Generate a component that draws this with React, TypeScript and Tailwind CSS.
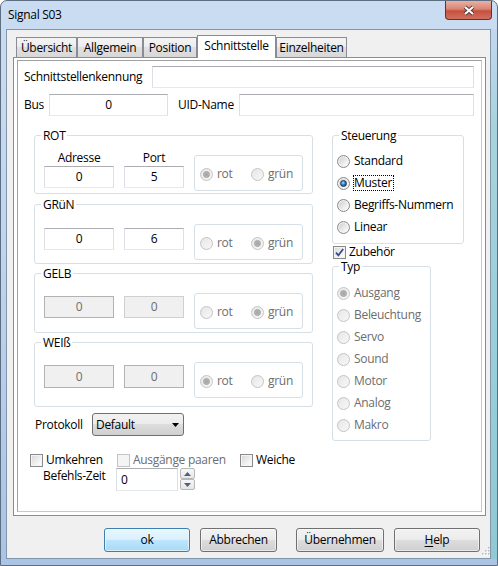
import React from "react";

const groupBorder = "border border-[#d5dfe5] rounded-[3px]";
const btnFace =
  "bg-[linear-gradient(to_bottom,#f2f2f2_0%,#ebebeb_50%,#dddddd_50%,#cfcfcf_100%)]";

interface DotProps {
  checked?: boolean;
  disabled?: boolean;
}

function RadioDot({ checked, disabled }: DotProps) {
  return (
    <span
      className={`w-[13px] h-[13px] shrink-0 rounded-full border flex items-center justify-center ${
        disabled
          ? "border-[#c4c4c4] bg-[linear-gradient(135deg,#e6e6e6,#f8f8f8)]"
          : "border-[#8a8a8a] bg-[linear-gradient(135deg,#c9c9c9,#f3f3f3_70%,#ffffff)] shadow-[inset_0_0_0_1px_#f4f4f4]"
      }`}
    >
      {checked && (
        <span
          className={`w-[7px] h-[7px] rounded-full border ${
            disabled
              ? "border-[#9f9f9f] bg-[radial-gradient(circle,#a8a8a8_35%,#c8c8c8_90%)]"
              : "border-[#1c3b5f] bg-[radial-gradient(circle_at_40%_35%,#a6e0fb,#2a86c5_45%,#0b3d6c_90%)]"
          }`}
        />
      )}
    </span>
  );
}

interface RadioProps extends DotProps {
  label: string;
  focus?: boolean;
  className?: string;
}

function Radio({ label, checked, disabled, focus, className = "" }: RadioProps) {
  return (
    <div className={`flex items-center ${className}`}>
      <RadioDot checked={checked} disabled={disabled} />
      {focus ? (
        <span className="ml-[3px] border border-dotted border-black leading-[14px] pr-[1px]">{label}</span>
      ) : (
        <span className={`ml-[4px] ${disabled ? "text-[#6d6d6d]" : ""}`}>{label}</span>
      )}
    </div>
  );
}

function CheckBox({ label, checked, disabled, className = "" }: RadioProps) {
  return (
    <div className={`flex items-center ${className}`}>
      <span
        className={`w-[13px] h-[13px] shrink-0 border flex items-center justify-center ${
          disabled
            ? "border-[#c4c4c4] bg-[#f4f4f4]"
            : "border-[#8a8a8a] bg-[linear-gradient(135deg,#d6d6d6,#f5f5f5_70%,#ffffff)] shadow-[inset_0_0_0_1px_#f4f4f4]"
        }`}
      >
        {checked && (
          <svg width="9" height="9" viewBox="0 0 9 9">
            <path d="M1 4.6 L3.4 7.3 L8.2 1" stroke="#34498a" strokeWidth="1.7" fill="none" />
          </svg>
        )}
      </span>
      <span className={`ml-[3px] ${disabled ? "text-[#6d6d6d]" : ""}`}>{label}</span>
    </div>
  );
}

interface BoxProps {
  value?: string;
  disabled?: boolean;
  left?: boolean;
  className?: string;
}

function TextBox({ value = "", disabled, left, className = "" }: BoxProps) {
  return (
    <div
      className={`flex items-center border ${left ? "justify-start pl-[4px]" : "justify-center"} ${
        disabled
          ? "bg-[#f0f0f0] border-[#b2b2b2] text-[#6d6d6d]"
          : "bg-white border-[#abadb3] border-l-[#dbdfe6] border-r-[#dbdfe6] border-b-[#e3e9ef]"
      } ${className}`}
    >
      {value}
    </div>
  );
}

function RadioPair({ rot, disabled, className = "" }: { rot: boolean; disabled?: boolean; className?: string }) {
  return (
    <div className={`${groupBorder} w-[109px] h-[36px] flex items-center pl-[5px] pt-[2px] ${className}`}>
      <Radio label="rot" checked={rot} disabled={disabled} className="w-[51px]" />
      <Radio label="grün" checked={!rot} disabled={disabled} />
    </div>
  );
}

function Group({ title, className = "", children }: { title: string; className?: string; children?: React.ReactNode }) {
  return (
    <div className={`${groupBorder} ${className}`}>
      <span className="block w-fit -mt-[7px] ml-[6px] px-[2px] bg-white leading-[14px]">{title}</span>
      {children}
    </div>
  );
}

function Button({ children, className = "", focused }: { children: React.ReactNode; className?: string; focused?: boolean }) {
  return (
    <div
      className={`h-[24px] flex items-center justify-center rounded-[3px] border ${
        focused
          ? "border-[#3c7fb1] bg-[linear-gradient(to_bottom,#eaf6fd_0%,#d9f0fc_50%,#bee6fd_50%,#a7d9f5_100%)]"
          : `border-[#707070] ${btnFace}`
      } shadow-[inset_0_0_0_1px_#fbfbfb99] ${className}`}
    >
      {children}
    </div>
  );
}

const tabs = [
  { label: "Übersicht", w: "w-[61px]" },
  { label: "Allgemein", w: "w-[66px]" },
  { label: "Position", w: "w-[54px]" },
  { label: "Schnittstelle", w: "w-[79px]", selected: true },
  { label: "Einzelheiten", w: "w-[71px]" },
];

const steuerung = ["Standard", "Muster", "Begriffs-Nummern", "Linear"];
const typen = ["Ausgang", "Beleuchtung", "Servo", "Sound", "Motor", "Analog", "Makro"];

export default function App() {
  return (
    <div className="w-[498px] h-[566px] font-['Open_Sans',sans-serif] text-[12px] leading-[16px] tracking-[-0.3px] text-black select-none">
      <div className="w-full h-full flex flex-col border border-[#5d6e82] rounded-t-[7px] overflow-hidden bg-[linear-gradient(to_bottom,#cadcf1,#c1d6ee_40%,#a9c4e5)]">
        {/* title bar */}
        <div className="h-[28px] shrink-0 flex items-start">
          <span className="ml-[7px] mt-[6px]">Signal S03</span>
          <div className="ml-auto mr-[5px] w-[47px] h-[19px] rounded-b-[4px] border border-t-0 border-[#6b2e25] bg-[linear-gradient(to_bottom,#eab1a3_0%,#d98474_45%,#c8503e_55%,#d0705e_100%)] flex items-center justify-center">
            <svg width="14" height="11" viewBox="0 0 14 11">
              <path d="M3 2 L11 9 M11 2 L3 9" stroke="#4b3430" strokeWidth="3.8" />
              <path d="M3 2 L11 9 M11 2 L3 9" stroke="#ffffff" strokeWidth="2.2" />
            </svg>
          </div>
        </div>

        <div className="flex h-[530px] shrink-0">
          <div className="w-[5px]" />
          {/* client area */}
          <div className="w-[485px] border border-[#8395ab] bg-[#f0f0f0] flex flex-col">
            <div className="ml-[6px] mt-[5px] w-[473px]">
              <div className="flex items-end h-[22px] pl-[3px]">
                {tabs.map((t) =>
                  t.selected ? (
                    <div
                      key={t.label}
                      className={`${t.w} relative z-10 h-[23px] -mb-px bg-white border border-b-0 border-[#898c95] flex justify-center pt-[2px]`}
                    >
                      {t.label}
                    </div>
                  ) : (
                    <div
                      key={t.label}
                      className={`${t.w} h-[20px] border border-b-0 border-[#898c95] flex justify-center pt-[2px] bg-[linear-gradient(to_bottom,#f4f4f4_0%,#ececec_50%,#e0e0e0_50%,#d8d8d8_100%)]`}
                    >
                      {t.label}
                    </div>
                  )
                )}
              </div>

              <div className="h-[459px] border border-[#898c95] bg-white pt-[2px] px-[3px] pb-[3px]">
                <div className="h-[452px] border border-[#a0a0a0] border-r-[#c8c8c8] border-b-[#c8c8c8]">
                  <div className="flex items-center mt-[5px] pl-[6px]">
                    <span className="w-[128px]">Schnittstellenkennung</span>
                    <TextBox className="w-[322px] h-[22px]" />
                  </div>
                  <div className="flex items-center mt-[6px] pl-[6px]">
                    <span className="w-[25px]">Bus</span>
                    <TextBox className="w-[119px] h-[22px]" value="0" />
                    <span className="ml-[10px] w-[61px]">UID-Name</span>
                    <TextBox className="w-[235px] h-[22px]" />
                  </div>

                  <div className="flex items-start mt-[19px] ml-[16px]">
                    {/* left column */}
                    <div className="w-[279px] flex flex-col">
                      <Group title="ROT" className="h-[59px]">
                        <div className="flex items-start mt-[7px]">
                          <div className="ml-[9px] w-[70px] flex flex-col">
                            <span className="text-center">Adresse</span>
                            <TextBox className="h-[22px]" value="0" />
                          </div>
                          <div className="ml-[10px] w-[60px] flex flex-col">
                            <span className="text-center">Port</span>
                            <TextBox className="h-[22px]" value="5" />
                          </div>
                          <RadioPair rot disabled className="ml-[10px] mt-[5px]" />
                        </div>
                      </Group>

                      <Group title="GRüN" className="h-[60px] mt-[10px]">
                        <div className="flex items-start mt-[12px]">
                          <TextBox className="ml-[9px] mt-[4px] w-[70px] h-[22px]" value="0" />
                          <TextBox className="ml-[10px] mt-[4px] w-[60px] h-[22px]" value="6" />
                          <RadioPair rot={false} disabled className="ml-[10px]" />
                        </div>
                      </Group>

                      <Group title="GELB" className="h-[60px] mt-[9px]">
                        <div className="flex items-start mt-[12px]">
                          <TextBox disabled className="ml-[9px] mt-[3px] w-[70px] h-[22px]" value="0" />
                          <TextBox disabled className="ml-[10px] mt-[3px] w-[60px] h-[22px] border-[#d0d0d0]" value="0" />
                          <RadioPair rot={false} disabled className="ml-[10px]" />
                        </div>
                      </Group>

                      <Group title="WEIß" className="h-[65px] mt-[9px]">
                        <div className="flex items-start mt-[12px]">
                          <TextBox disabled className="ml-[9px] mt-[3px] w-[70px] h-[23px]" value="0" />
                          <TextBox disabled className="ml-[10px] mt-[3px] w-[60px] h-[23px]" value="0" />
                          <RadioPair rot disabled className="ml-[10px]" />
                        </div>
                      </Group>

                      <div className="flex items-center mt-[6px] h-[23px]">
                        <span className="ml-[1px] w-[57px]">Protokoll</span>
                        <div
                          className={`w-[92px] h-[23px] rounded-[3px] border border-[#707070] ${btnFace} flex items-center pl-[3px] pr-[4px]`}
                        >
                          <span>Default</span>
                          <svg className="ml-auto" width="7" height="4" viewBox="0 0 7 4">
                            <path d="M0 0 L7 0 L3.5 4 Z" fill="#000000" />
                          </svg>
                        </div>
                      </div>
                    </div>

                    {/* right column */}
                    <div className="ml-[19px] w-[132px] flex flex-col">
                      <Group title="Steuerung" className="h-[109px]">
                        <div className="mt-[7px] flex flex-col">
                          {steuerung.map((s) => (
                            <Radio
                              key={s}
                              label={s}
                              checked={s === "Muster"}
                              focus={s === "Muster"}
                              className="h-[22px] pl-[4px]"
                            />
                          ))}
                        </div>
                      </Group>
                      <CheckBox label="Zubehör" checked className="h-[14px] mt-[1px] ml-[1px] leading-[14px]" />
                      <Group title="Typ" className="w-[99px] h-[175px] mt-[7px]">
                        <div className="mt-[8px] flex flex-col">
                          {typen.map((s) => (
                            <Radio
                              key={s}
                              label={s}
                              checked={s === "Ausgang"}
                              disabled
                              className="h-[22px] pl-[4px]"
                            />
                          ))}
                        </div>
                      </Group>
                    </div>
                  </div>

                  <div className="flex items-center h-[16px] mt-[11px] ml-[12px]">
                    <CheckBox label="Umkehren" className="w-[87px]" />
                    <CheckBox label="Ausgänge paaren" disabled className="w-[123px]" />
                    <CheckBox label="Weiche" />
                  </div>

                  <div className="flex items-start">
                    <span className="ml-[25px] w-[73px]">Befehls-Zeit</span>
                    <TextBox left className="w-[62px] h-[23px]" value="0" />
                    <div className="ml-[2px] w-[15px] flex flex-col">
                      {["up", "down"].map((d) => (
                        <div
                          key={d}
                          className="h-[11px] border border-[#b8b8b8] rounded-[2px] bg-[linear-gradient(to_bottom,#f7f7f7,#e6e6e6)] flex items-center justify-center"
                        >
                          <svg width="7" height="4" viewBox="0 0 7 4">
                            <path d={d === "up" ? "M0 4 L3.5 0 L7 4 Z" : "M0 0 L7 0 L3.5 4 Z"} fill="#4c5f86" />
                          </svg>
                        </div>
                      ))}
                    </div>
                  </div>
                </div>
              </div>
            </div>

            {/* dialog buttons */}
            <div className="flex items-start mt-[12px] ml-[97px]">
              <Button focused className="w-[86px]">ok</Button>
              <Button className="ml-[10px] w-[77px]">Abbrechen</Button>
              <Button className="ml-[19px] w-[88px]">Übernehmen</Button>
              <Button className="ml-[10px] w-[86px]">
                <span>
                  <span className="underline underline-offset-2">H</span>elp
                </span>
              </Button>
              <svg className="ml-[2px] mt-[19px]" width="8" height="9" viewBox="0 0 8 9">
                {[
                  [6, 0],
                  [3, 3],
                  [6, 3],
                  [0, 6],
                  [3, 6],
                  [6, 6],
                ].map(([x, y]) => (
                  <g key={`${x}-${y}`}>
                    <rect x={x + 1} y={y + 1} width="1.5" height="1.5" fill="#ffffff" />
                    <rect x={x} y={y} width="1.5" height="1.5" fill="#b8b8b8" />
                  </g>
                ))}
              </svg>
            </div>
          </div>
          <div className="flex-1 bg-[linear-gradient(to_bottom,#c3d7ee_0%,#a7d4dc_18%,#98cfd8_60%,#8fc9d3_100%)]" />
        </div>
        <div className="flex-1" />
      </div>
    </div>
  );
}
